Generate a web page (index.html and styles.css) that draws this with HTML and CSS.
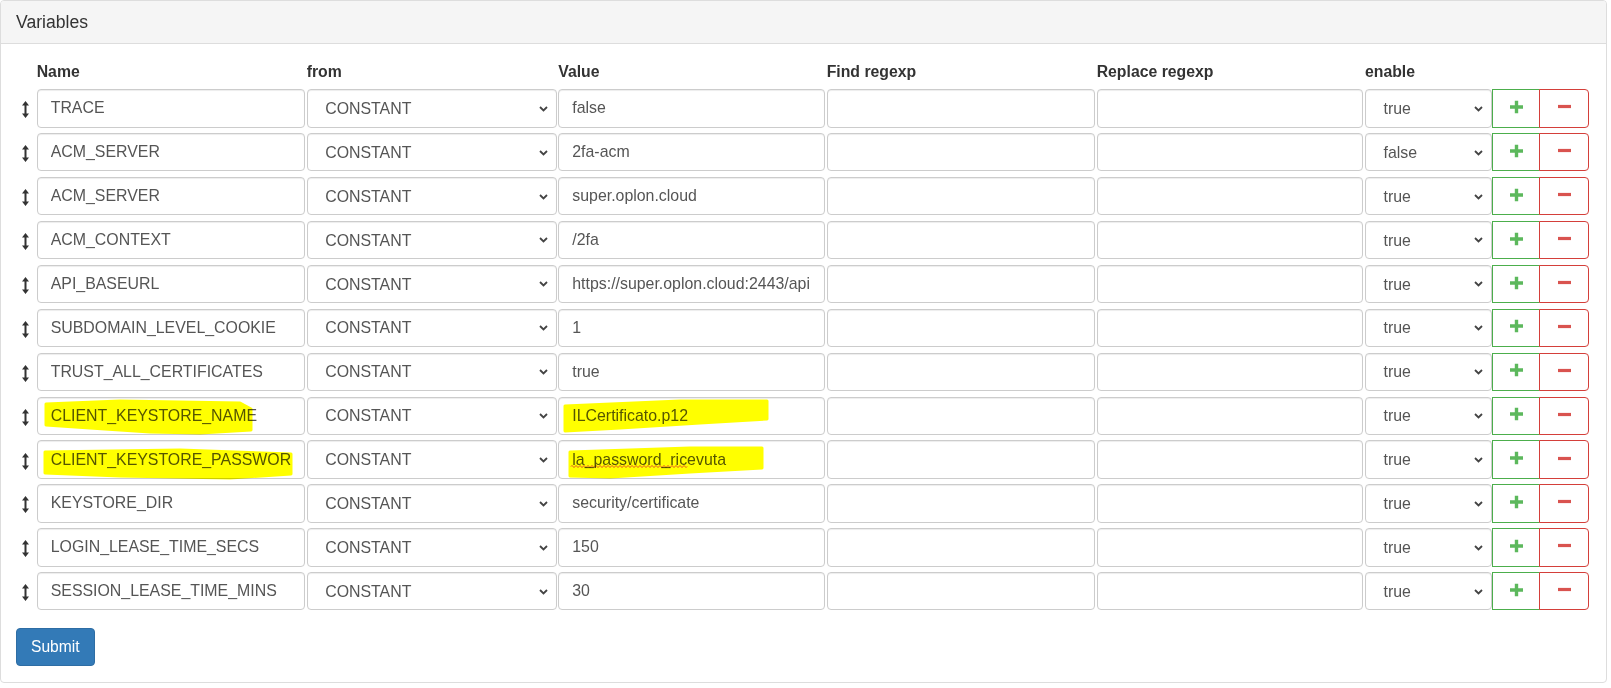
FILE: index.html
```html
<!DOCTYPE html>
<html lang="en">

<head>
    <meta charset="UTF-8">
    <meta name="viewport" content="width=device-width, initial-scale=1.0">
    <title>Variables</title>
    <link rel="stylesheet" href="styles.css">
</head>

<body>
    <div class="panel">
        <div class="panel-heading">Variables</div>
        <form class="panel-body">
            <div class="var-row head">
                <span></span>
                <span class="label">Name</span>
                <span class="label">from</span>
                <span class="label">Value</span>
                <span class="label">Find regexp</span>
                <span class="label">Replace regexp</span>
                <span class="label">enable</span>
                <span></span>
                <span></span>
            </div>

            <div class="var-row">
                <span class="handle"><svg width="7" height="17" viewBox="0 0 7 17"><path d="M3.5 0L7 4.5H4.5v8H7L3.5 17L0 12.5h2.5v-8H0z" /></svg></span>
                <input class="field" type="text" value="TRACE">
                <span class="select-wrap"><select class="field"><option>CONSTANT</option></select><svg class="chevron" width="9" height="6" viewBox="0 0 9 6"><path d="M1 1l3.5 3.5L8 1" /></svg></span>
                <input class="field" type="text" value="false">
                <input class="field" type="text">
                <input class="field" type="text">
                <span class="select-wrap enable"><select class="field"><option>true</option><option>false</option></select><svg class="chevron" width="9" height="6" viewBox="0 0 9 6"><path d="M1 1l3.5 3.5L8 1" /></svg></span>
                <button type="button" class="btn add"><svg width="13" height="13" viewBox="0 0 13 13"><path d="M4.8 0h3.4v4.8H13v3.4H8.2V13H4.8V8.2H0V4.8h4.8z" /></svg></button>
                <button type="button" class="btn remove"><svg width="13" height="4" viewBox="0 0 13 4"><rect y="0.3" width="13" height="3.4" /></svg></button>
            </div>

            <div class="var-row">
                <span class="handle"><svg width="7" height="17" viewBox="0 0 7 17"><path d="M3.5 0L7 4.5H4.5v8H7L3.5 17L0 12.5h2.5v-8H0z" /></svg></span>
                <input class="field" type="text" value="ACM_SERVER">
                <span class="select-wrap"><select class="field"><option>CONSTANT</option></select><svg class="chevron" width="9" height="6" viewBox="0 0 9 6"><path d="M1 1l3.5 3.5L8 1" /></svg></span>
                <input class="field" type="text" value="2fa-acm">
                <input class="field" type="text">
                <input class="field" type="text">
                <span class="select-wrap enable"><select class="field"><option>false</option><option>true</option></select><svg class="chevron" width="9" height="6" viewBox="0 0 9 6"><path d="M1 1l3.5 3.5L8 1" /></svg></span>
                <button type="button" class="btn add"><svg width="13" height="13" viewBox="0 0 13 13"><path d="M4.8 0h3.4v4.8H13v3.4H8.2V13H4.8V8.2H0V4.8h4.8z" /></svg></button>
                <button type="button" class="btn remove"><svg width="13" height="4" viewBox="0 0 13 4"><rect y="0.3" width="13" height="3.4" /></svg></button>
            </div>

            <div class="var-row">
                <span class="handle"><svg width="7" height="17" viewBox="0 0 7 17"><path d="M3.5 0L7 4.5H4.5v8H7L3.5 17L0 12.5h2.5v-8H0z" /></svg></span>
                <input class="field" type="text" value="ACM_SERVER">
                <span class="select-wrap"><select class="field"><option>CONSTANT</option></select><svg class="chevron" width="9" height="6" viewBox="0 0 9 6"><path d="M1 1l3.5 3.5L8 1" /></svg></span>
                <input class="field" type="text" value="super.oplon.cloud">
                <input class="field" type="text">
                <input class="field" type="text">
                <span class="select-wrap enable"><select class="field"><option>true</option><option>false</option></select><svg class="chevron" width="9" height="6" viewBox="0 0 9 6"><path d="M1 1l3.5 3.5L8 1" /></svg></span>
                <button type="button" class="btn add"><svg width="13" height="13" viewBox="0 0 13 13"><path d="M4.8 0h3.4v4.8H13v3.4H8.2V13H4.8V8.2H0V4.8h4.8z" /></svg></button>
                <button type="button" class="btn remove"><svg width="13" height="4" viewBox="0 0 13 4"><rect y="0.3" width="13" height="3.4" /></svg></button>
            </div>

            <div class="var-row">
                <span class="handle"><svg width="7" height="17" viewBox="0 0 7 17"><path d="M3.5 0L7 4.5H4.5v8H7L3.5 17L0 12.5h2.5v-8H0z" /></svg></span>
                <input class="field" type="text" value="ACM_CONTEXT">
                <span class="select-wrap"><select class="field"><option>CONSTANT</option></select><svg class="chevron" width="9" height="6" viewBox="0 0 9 6"><path d="M1 1l3.5 3.5L8 1" /></svg></span>
                <input class="field" type="text" value="/2fa">
                <input class="field" type="text">
                <input class="field" type="text">
                <span class="select-wrap enable"><select class="field"><option>true</option><option>false</option></select><svg class="chevron" width="9" height="6" viewBox="0 0 9 6"><path d="M1 1l3.5 3.5L8 1" /></svg></span>
                <button type="button" class="btn add"><svg width="13" height="13" viewBox="0 0 13 13"><path d="M4.8 0h3.4v4.8H13v3.4H8.2V13H4.8V8.2H0V4.8h4.8z" /></svg></button>
                <button type="button" class="btn remove"><svg width="13" height="4" viewBox="0 0 13 4"><rect y="0.3" width="13" height="3.4" /></svg></button>
            </div>

            <div class="var-row">
                <span class="handle"><svg width="7" height="17" viewBox="0 0 7 17"><path d="M3.5 0L7 4.5H4.5v8H7L3.5 17L0 12.5h2.5v-8H0z" /></svg></span>
                <input class="field" type="text" value="API_BASEURL">
                <span class="select-wrap"><select class="field"><option>CONSTANT</option></select><svg class="chevron" width="9" height="6" viewBox="0 0 9 6"><path d="M1 1l3.5 3.5L8 1" /></svg></span>
                <input class="field" type="text" value="https://super.oplon.cloud:2443/api">
                <input class="field" type="text">
                <input class="field" type="text">
                <span class="select-wrap enable"><select class="field"><option>true</option><option>false</option></select><svg class="chevron" width="9" height="6" viewBox="0 0 9 6"><path d="M1 1l3.5 3.5L8 1" /></svg></span>
                <button type="button" class="btn add"><svg width="13" height="13" viewBox="0 0 13 13"><path d="M4.8 0h3.4v4.8H13v3.4H8.2V13H4.8V8.2H0V4.8h4.8z" /></svg></button>
                <button type="button" class="btn remove"><svg width="13" height="4" viewBox="0 0 13 4"><rect y="0.3" width="13" height="3.4" /></svg></button>
            </div>

            <div class="var-row">
                <span class="handle"><svg width="7" height="17" viewBox="0 0 7 17"><path d="M3.5 0L7 4.5H4.5v8H7L3.5 17L0 12.5h2.5v-8H0z" /></svg></span>
                <input class="field" type="text" value="SUBDOMAIN_LEVEL_COOKIE">
                <span class="select-wrap"><select class="field"><option>CONSTANT</option></select><svg class="chevron" width="9" height="6" viewBox="0 0 9 6"><path d="M1 1l3.5 3.5L8 1" /></svg></span>
                <input class="field" type="text" value="1">
                <input class="field" type="text">
                <input class="field" type="text">
                <span class="select-wrap enable"><select class="field"><option>true</option><option>false</option></select><svg class="chevron" width="9" height="6" viewBox="0 0 9 6"><path d="M1 1l3.5 3.5L8 1" /></svg></span>
                <button type="button" class="btn add"><svg width="13" height="13" viewBox="0 0 13 13"><path d="M4.8 0h3.4v4.8H13v3.4H8.2V13H4.8V8.2H0V4.8h4.8z" /></svg></button>
                <button type="button" class="btn remove"><svg width="13" height="4" viewBox="0 0 13 4"><rect y="0.3" width="13" height="3.4" /></svg></button>
            </div>

            <div class="var-row">
                <span class="handle"><svg width="7" height="17" viewBox="0 0 7 17"><path d="M3.5 0L7 4.5H4.5v8H7L3.5 17L0 12.5h2.5v-8H0z" /></svg></span>
                <input class="field" type="text" value="TRUST_ALL_CERTIFICATES">
                <span class="select-wrap"><select class="field"><option>CONSTANT</option></select><svg class="chevron" width="9" height="6" viewBox="0 0 9 6"><path d="M1 1l3.5 3.5L8 1" /></svg></span>
                <input class="field" type="text" value="true">
                <input class="field" type="text">
                <input class="field" type="text">
                <span class="select-wrap enable"><select class="field"><option>true</option><option>false</option></select><svg class="chevron" width="9" height="6" viewBox="0 0 9 6"><path d="M1 1l3.5 3.5L8 1" /></svg></span>
                <button type="button" class="btn add"><svg width="13" height="13" viewBox="0 0 13 13"><path d="M4.8 0h3.4v4.8H13v3.4H8.2V13H4.8V8.2H0V4.8h4.8z" /></svg></button>
                <button type="button" class="btn remove"><svg width="13" height="4" viewBox="0 0 13 4"><rect y="0.3" width="13" height="3.4" /></svg></button>
            </div>

            <div class="var-row">
                <span class="handle"><svg width="7" height="17" viewBox="0 0 7 17"><path d="M3.5 0L7 4.5H4.5v8H7L3.5 17L0 12.5h2.5v-8H0z" /></svg></span>
                <input class="field" type="text" value="CLIENT_KEYSTORE_NAME">
                <span class="select-wrap"><select class="field"><option>CONSTANT</option></select><svg class="chevron" width="9" height="6" viewBox="0 0 9 6"><path d="M1 1l3.5 3.5L8 1" /></svg></span>
                <input class="field" type="text" value="ILCertificato.p12">
                <input class="field" type="text">
                <input class="field" type="text">
                <span class="select-wrap enable"><select class="field"><option>true</option><option>false</option></select><svg class="chevron" width="9" height="6" viewBox="0 0 9 6"><path d="M1 1l3.5 3.5L8 1" /></svg></span>
                <button type="button" class="btn add"><svg width="13" height="13" viewBox="0 0 13 13"><path d="M4.8 0h3.4v4.8H13v3.4H8.2V13H4.8V8.2H0V4.8h4.8z" /></svg></button>
                <button type="button" class="btn remove"><svg width="13" height="4" viewBox="0 0 13 4"><rect y="0.3" width="13" height="3.4" /></svg></button>
            </div>

            <div class="var-row">
                <span class="handle"><svg width="7" height="17" viewBox="0 0 7 17"><path d="M3.5 0L7 4.5H4.5v8H7L3.5 17L0 12.5h2.5v-8H0z" /></svg></span>
                <input class="field" type="text" value="CLIENT_KEYSTORE_PASSWORD">
                <span class="select-wrap"><select class="field"><option>CONSTANT</option></select><svg class="chevron" width="9" height="6" viewBox="0 0 9 6"><path d="M1 1l3.5 3.5L8 1" /></svg></span>
                <input class="field misspelled" type="text" value="la_password_ricevuta">
                <input class="field" type="text">
                <input class="field" type="text">
                <span class="select-wrap enable"><select class="field"><option>true</option><option>false</option></select><svg class="chevron" width="9" height="6" viewBox="0 0 9 6"><path d="M1 1l3.5 3.5L8 1" /></svg></span>
                <button type="button" class="btn add"><svg width="13" height="13" viewBox="0 0 13 13"><path d="M4.8 0h3.4v4.8H13v3.4H8.2V13H4.8V8.2H0V4.8h4.8z" /></svg></button>
                <button type="button" class="btn remove"><svg width="13" height="4" viewBox="0 0 13 4"><rect y="0.3" width="13" height="3.4" /></svg></button>
            </div>

            <div class="var-row">
                <span class="handle"><svg width="7" height="17" viewBox="0 0 7 17"><path d="M3.5 0L7 4.5H4.5v8H7L3.5 17L0 12.5h2.5v-8H0z" /></svg></span>
                <input class="field" type="text" value="KEYSTORE_DIR">
                <span class="select-wrap"><select class="field"><option>CONSTANT</option></select><svg class="chevron" width="9" height="6" viewBox="0 0 9 6"><path d="M1 1l3.5 3.5L8 1" /></svg></span>
                <input class="field" type="text" value="security/certificate">
                <input class="field" type="text">
                <input class="field" type="text">
                <span class="select-wrap enable"><select class="field"><option>true</option><option>false</option></select><svg class="chevron" width="9" height="6" viewBox="0 0 9 6"><path d="M1 1l3.5 3.5L8 1" /></svg></span>
                <button type="button" class="btn add"><svg width="13" height="13" viewBox="0 0 13 13"><path d="M4.8 0h3.4v4.8H13v3.4H8.2V13H4.8V8.2H0V4.8h4.8z" /></svg></button>
                <button type="button" class="btn remove"><svg width="13" height="4" viewBox="0 0 13 4"><rect y="0.3" width="13" height="3.4" /></svg></button>
            </div>

            <div class="var-row">
                <span class="handle"><svg width="7" height="17" viewBox="0 0 7 17"><path d="M3.5 0L7 4.5H4.5v8H7L3.5 17L0 12.5h2.5v-8H0z" /></svg></span>
                <input class="field" type="text" value="LOGIN_LEASE_TIME_SECS">
                <span class="select-wrap"><select class="field"><option>CONSTANT</option></select><svg class="chevron" width="9" height="6" viewBox="0 0 9 6"><path d="M1 1l3.5 3.5L8 1" /></svg></span>
                <input class="field" type="text" value="150">
                <input class="field" type="text">
                <input class="field" type="text">
                <span class="select-wrap enable"><select class="field"><option>true</option><option>false</option></select><svg class="chevron" width="9" height="6" viewBox="0 0 9 6"><path d="M1 1l3.5 3.5L8 1" /></svg></span>
                <button type="button" class="btn add"><svg width="13" height="13" viewBox="0 0 13 13"><path d="M4.8 0h3.4v4.8H13v3.4H8.2V13H4.8V8.2H0V4.8h4.8z" /></svg></button>
                <button type="button" class="btn remove"><svg width="13" height="4" viewBox="0 0 13 4"><rect y="0.3" width="13" height="3.4" /></svg></button>
            </div>

            <div class="var-row">
                <span class="handle"><svg width="7" height="17" viewBox="0 0 7 17"><path d="M3.5 0L7 4.5H4.5v8H7L3.5 17L0 12.5h2.5v-8H0z" /></svg></span>
                <input class="field" type="text" value="SESSION_LEASE_TIME_MINS">
                <span class="select-wrap"><select class="field"><option>CONSTANT</option></select><svg class="chevron" width="9" height="6" viewBox="0 0 9 6"><path d="M1 1l3.5 3.5L8 1" /></svg></span>
                <input class="field" type="text" value="30">
                <input class="field" type="text">
                <input class="field" type="text">
                <span class="select-wrap enable"><select class="field"><option>true</option><option>false</option></select><svg class="chevron" width="9" height="6" viewBox="0 0 9 6"><path d="M1 1l3.5 3.5L8 1" /></svg></span>
                <button type="button" class="btn add"><svg width="13" height="13" viewBox="0 0 13 13"><path d="M4.8 0h3.4v4.8H13v3.4H8.2V13H4.8V8.2H0V4.8h4.8z" /></svg></button>
                <button type="button" class="btn remove"><svg width="13" height="4" viewBox="0 0 13 4"><rect y="0.3" width="13" height="3.4" /></svg></button>
            </div>

            <button type="submit" class="btn-submit">Submit</button>
        </form>

        <!-- marker strokes drawn on top of the screenshot -->
        <svg class="marker" width="1611" height="688" viewBox="0 0 1611 688">
            <path d="M46 404L120 401L240 403L251 409L251 430L200 433L150 432L90 428L46 425Z" />
            <path d="M45 452L180 450L291 454L291 474L230 478L120 476L45 473Z" />
            <path d="M565 406L680 401L767 401L767 419L700 423L620 428L565 431Z" />
            <path d="M570 452L690 448L762 448L762 468L690 472L610 477L570 476Z" />
            <path class="squiggle" d="M571 466.5q1 -2 2 0t2 0t2 0t2 0t2 0t2 0t2 0t2 0t2 0t2 0t2 0t2 0t2 0t2 0t2 0t2 0t2 0t2 0t2 0t2 0t2 0t2 0t2 0t2 0t2 0t2 0t2 0t2 0t2 0t2 0t2 0t2 0t2 0t2 0t2 0t2 0t2 0t2 0t2 0t2 0t2 0t2 0t2 0t2 0t2 0t2 0t2 0t2 0t2 0t2 0t2 0t2 0t2 0t2 0t2 0t2 0t2 0t2 0" />
        </svg>
    </div>
</body>

</html>
```

FILE: styles.css
```css
* {
    margin: 0;
    padding: 0;
    box-sizing: border-box;
}

body {
    font-family: 'Liberation Sans', Arial, sans-serif;
    font-size: 15.8px;
    color: #333;
    background: #fff;
}

.panel {
    position: relative;
    width: 1607px;
    border: 1px solid #ddd;
    border-radius: 4px;
    background: #fff;
}

.panel-heading {
    height: 43px;
    padding: 0 15px;
    line-height: 42px;
    font-size: 17.6px;
    color: #333;
    background-color: #f5f5f5;
    border-bottom: 1px solid #ddd;
    border-radius: 3px 3px 0 0;
}

.panel-body {
    padding: 15px 15px 16px 15px;
}

.var-row {
    display: grid;
    grid-template-columns: 20.7px 270px 251.6px 268.4px 270px 268.3px 126.7px 48.7px 48.6px;
    align-items: center;
    height: 38.3px;
    margin-bottom: 5.6px;
}

.var-row.head {
    height: 30.3px;
    margin-bottom: 0;
    align-items: start;
    padding-top: 2px;
}

.label {
    font-weight: bold;
    line-height: 22px;
    color: #333;
}

.handle {
    display: flex;
    justify-content: center;
    padding-right: 2px;
    padding-top: 3px;
}

.handle svg {
    fill: #333;
}

.field {
    width: calc(100% - 1.7px);
    height: 38.3px;
    padding: 6px 13px;
    font-family: inherit;
    font-size: 15.9px;
    color: #555;
    background-color: #fff;
    border: 1px solid #ccc;
    border-radius: 4px;
    box-shadow: inset 0 1px 1px rgba(0, 0, 0, 0.075);
    outline: none;
}

.select-wrap {
    position: relative;
    display: block;
    width: calc(100% - 1.7px);
    height: 38.3px;
}

.select-wrap.enable {
    width: 100%;
}

.select-wrap select.field {
    width: 100%;
    padding: 6px 28px 6px 17.5px;
    appearance: none;
    -webkit-appearance: none;
}

.chevron {
    position: absolute;
    right: 8.5px;
    top: 16.5px;
    pointer-events: none;
}

.chevron path {
    fill: none;
    stroke: #444;
    stroke-width: 1.8;
}

.btn {
    display: flex;
    justify-content: center;
    align-items: center;
    height: 38.3px;
    background-color: #fff;
    cursor: pointer;
}

.btn svg {
    transform: translateY(-1.5px);
}

.btn.add {
    border: 1px solid #4cae4c;
    border-radius: 0;
}

.btn.add svg {
    fill: #5cb85c;
}

.btn.remove {
    width: calc(100% + 1px);
    margin-left: -1px;
    border: 1px solid #d43f3a;
    border-radius: 0 4px 4px 0;
}

.btn.remove svg {
    fill: #d9534f;
}

.btn-submit {
    display: block;
    margin-top: 18px;
    height: 37.4px;
    padding: 0 14px;
    font-family: inherit;
    font-size: 15.6px;
    color: #fff;
    background-color: #337ab7;
    border: 1px solid #2e6da4;
    border-radius: 4px;
    cursor: pointer;
}

.marker {
    position: absolute;
    left: -1px;
    top: -1px;
    pointer-events: none;
    mix-blend-mode: multiply;
}

.marker path {
    fill: #ffff00;
    stroke: #ffff00;
    stroke-width: 3;
    stroke-linejoin: round;
}

.marker path.squiggle {
    fill: none;
    stroke: #e03030;
    stroke-width: 0.9;
}
```
